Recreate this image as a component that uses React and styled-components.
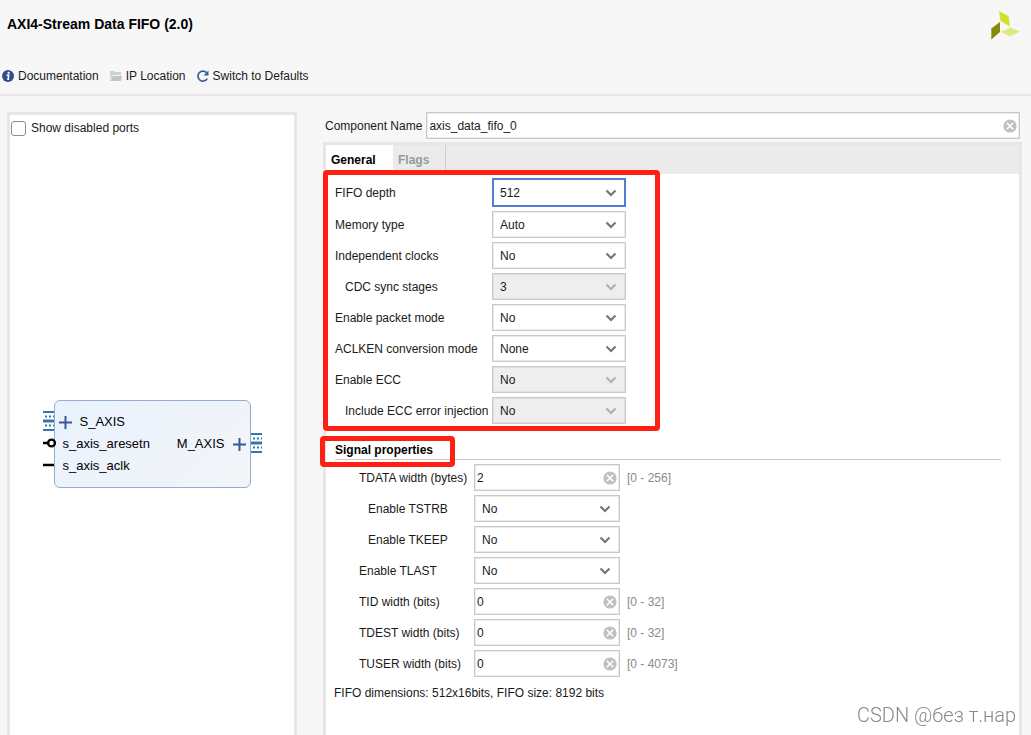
import { useState } from "react";
import styled, { createGlobalStyle } from "styled-components";

const GlobalStyle = createGlobalStyle`
  * {
    box-sizing: border-box;
  }

  body {
    margin: 0;
    background-color: #f7f7f7;
    color: #1a1a1a;
    font-family: "Liberation Sans", Arial, sans-serif;
    font-size: 12px;
    line-height: 16px;
  }

  button, input, select {
    font: inherit;
    color: inherit;
  }
`;

const Page = styled.div`
  display: flex;
  flex-direction: column;
  height: 100vh;
  overflow: hidden;
`;

const Header = styled.header`
  display: flex;
  justify-content: space-between;
  padding: 10px 11px 0 7px;
`;

const Title = styled.h1`
  margin: 5px 0 0;
  font-size: 14px;
  line-height: 18px;
  font-weight: bold;
  color: #000;
`;

const Toolbar = styled.nav`
  display: flex;
  align-items: center;
  gap: 11px;
  padding: 27px 2px 9px;
  border-bottom: 2px solid #e6e6e6;
`;

const ToolButton = styled.button`
  display: flex;
  align-items: center;
  gap: 4px;
  height: 18px;
  padding: 0;
  border: none;
  background: none;
  cursor: pointer;
`;

const Body = styled.main`
  flex: 1;
  display: flex;
  gap: 26px;
  padding: 16px 9px 0 7px;
  min-height: 0;
`;

const Preview = styled.section`
  display: flex;
  flex-direction: column;
  width: 28%;
  min-width: 290px;
  max-width: 290px;
  border: 3px solid #e6e6e6;
  border-bottom: none;
  background-color: #fff;
`;

const CheckLabel = styled.label`
  display: flex;
  align-items: center;
  gap: 5px;
  padding: 5px 1px;
`;

const Checkbox = styled.input`
  appearance: none;
  width: 15px;
  height: 15px;
  margin: 0;
  border: 1px solid #8c8c8c;
  border-radius: 3px;
  background-color: #fff;

  &:checked {
    background-color: #35599c;
  }
`;

const Canvas = styled.div`
  flex: 1;
  display: flex;
  align-items: center;
  justify-content: center;
  padding-top: 12px;
`;

const Block = styled.div`
  display: flex;
  justify-content: space-between;
  align-items: center;
  width: 197px;
  height: 88px;
  padding: 0 4px 0 4px;
  border: 1px solid #94abd6;
  border-radius: 6px;
  background: linear-gradient(135deg, #e9f2fd, #f3f5f8);
  font-size: 13px;
  line-height: 22px;
  color: #000;
`;

const PortList = styled.ul`
  margin: 0;
  padding: 0;
  list-style: none;
`;

const Port = styled.li`
  display: flex;
  align-items: center;
  gap: ${({ $bus }) => ($bus ? "8px" : "0")};
  padding-left: ${({ $bus }) => ($bus ? "0" : "4px")};
`;

const Config = styled.section`
  flex: 1;
  display: flex;
  flex-direction: column;
  min-width: 0;
`;

const NameRow = styled.div`
  display: flex;
  align-items: center;
  gap: 4px;
  padding: 0 2px;
  margin-bottom: 3px;
`;

const Panel = styled.div`
  flex: 1;
  border: 3px solid #e6e6e6;
  border-bottom: none;
  background-color: #fff;
`;

const Tabs = styled.div`
  display: flex;
  height: 29px;
  background-color: #ebebeb;
`;

const Tab = styled.button`
  width: ${({ $active }) => ($active ? "67px" : "53px")};
  padding: 0 5px;
  border: none;
  border-right: ${({ $active }) => ($active ? "none" : "1px solid #cfcfcf")};
  background-color: ${({ $active }) => ($active ? "#fff" : "transparent")};
  color: ${({ $active }) => ($active ? "#000" : "#999")};
  font-weight: bold;
  text-align: left;
  cursor: pointer;
`;

const Group = styled.div`
  position: relative;
  display: flex;
  flex-direction: column;
  gap: 4px;
  padding: 4px 9px 0;
`;

const Outline = styled.div`
  position: absolute;
  top: ${({ $top }) => $top}px;
  left: ${({ $left }) => $left}px;
  width: ${({ $width }) => $width}px;
  height: ${({ $height }) => $height}px;
  border: 5px solid #ff2015;
  border-radius: 4px;
  pointer-events: none;
`;

const Row = styled.div`
  display: flex;
  align-items: center;
`;

const Label = styled.label`
  width: ${({ $wide }) => ($wide ? "157px" : "139px")};
  padding-left: ${({ $indent }) => $indent || 0}px;
  white-space: nowrap;
`;

const Field = styled.div`
  display: grid;
  align-items: center;
  flex: ${({ $width }) => ($width ? "none" : "1")};
  width: ${({ $width }) => ($width ? `${$width}px` : "auto")};

  > * {
    grid-area: 1 / 1;
  }
`;

const SelectBox = styled.select`
  appearance: none;
  width: 100%;
  height: 27px;
  padding: 0 24px 0 7px;
  border: 1px solid #c9c9c9;
  border-radius: 0;
  background-color: #fff;
  box-shadow: inset 0 0 0 1px #ebebeb;
  outline: none;

  &:disabled {
    background-color: #eee;
    box-shadow: inset 0 0 0 1px #e0e0e0;
    color: inherit;
    opacity: 1;
  }
`;

const ActiveSelect = styled(SelectBox)`
  height: 29px;
  padding-left: 6px;
  border: 2px solid #4f7ed2;
  box-shadow: none;
`;

const TextBox = styled.input`
  width: 100%;
  height: 27px;
  padding: 0 24px 0 2px;
  border: 1px solid #c9c9c9;
  background-color: #fff;
  box-shadow: inset 0 0 0 1px #ebebeb;
  outline: none;
`;

const ChevronIcon = styled.svg`
  justify-self: end;
  margin-right: 9px;
  pointer-events: none;
`;

const ClearButton = styled.button`
  justify-self: end;
  display: flex;
  margin-right: 3px;
  padding: 0;
  border: none;
  background: none;
  cursor: pointer;
`;

const Range = styled.span`
  margin-left: 7px;
  color: #8a8a8a;
`;

const SectionTitle = styled.h2`
  position: relative;
  margin: 17px 18px 0 9px;
  border-bottom: 1px solid #c8c8c8;
  font-size: 12px;
  line-height: 18px;
  font-weight: bold;
  color: #000;
`;

const Summary = styled.p`
  margin: 8px 8px 0;
`;

const Watermark = styled.div`
  position: fixed;
  right: 15px;
  bottom: 8px;
  font-family: Roboto, sans-serif;
  font-size: 20px;
  font-weight: 300;
  line-height: 24px;
  color: #888;
  pointer-events: none;
`;

const PinColumn = styled.svg`
  position: relative;
  overflow: visible;
`;

const generalFields = [
  { id: "depth", label: "FIFO depth", value: "512", active: true },
  { id: "memory", label: "Memory type", value: "Auto" },
  { id: "clocks", label: "Independent clocks", value: "No" },
  { id: "cdc", label: "CDC sync stages", value: "3", indent: 10, disabled: true },
  { id: "packet", label: "Enable packet mode", value: "No" },
  { id: "aclken", label: "ACLKEN conversion mode", value: "None" },
  { id: "ecc", label: "Enable ECC", value: "No", disabled: true },
  { id: "eccError", label: "Include ECC error injection", value: "No", indent: 10, disabled: true },
];

const signalFields = [
  { id: "tdata", label: "TDATA width (bytes)", value: "2", range: "[0 - 256]", indent: 24 },
  { id: "tstrb", label: "Enable TSTRB", value: "No", indent: 33 },
  { id: "tkeep", label: "Enable TKEEP", value: "No", indent: 33 },
  { id: "tlast", label: "Enable TLAST", value: "No", indent: 24 },
  { id: "tid", label: "TID width (bits)", value: "0", range: "[0 - 32]", indent: 24 },
  { id: "tdest", label: "TDEST width (bits)", value: "0", range: "[0 - 32]", indent: 24 },
  { id: "tuser", label: "TUSER width (bits)", value: "0", range: "[0 - 4073]", indent: 24 },
];

const Logo = () => (
  <svg width="30" height="30" viewBox="0 0 30 30" aria-hidden="true">
    <path d="M9 1l9.500 5 1.500 10.500-9.500-5.500z" fill="#d3e02f" />
    <path d="M1.300 18.500l8.700-6.500v10l-8.700 7.500z" fill="#858a0c" />
    <path d="M10.500 21.800l10-4.300 9.500 4-10 4.700z" fill="#dfe97c" />
  </svg>
);

const InfoIcon = () => (
  <svg width="12" height="12" viewBox="0 0 12 12" aria-hidden="true">
    <circle cx="6" cy="6" r="6" fill="#2f4f8c" />
    <circle cx="6.6" cy="2.9" r="1.1" fill="#fff" />
    <path d="M4.6 5.2h2.2L6 9.2h1.2" fill="none" stroke="#fff" strokeWidth="1.5" />
  </svg>
);

const FolderIcon = () => (
  <svg width="12" height="12" viewBox="0 0 12 12" aria-hidden="true">
    <path d="M0 1h4l1 1h6v3H3L0 9z" fill="#d0d0d0" />
    <path d="M3 6h9l-1 5H0z" fill="#c4c4c4" />
  </svg>
);

const RefreshIcon = () => (
  <svg width="12" height="12" viewBox="0 0 12 12" aria-hidden="true">
    <path d="M10.2 8.8A5 5 0 1 1 9.6 2.6" fill="none" stroke="#3c5c9c" strokeWidth="1.7" />
    <path d="M11.5 0.5v5h-5z" fill="#3c5c9c" />
  </svg>
);

const ClearIcon = () => (
  <svg width="14" height="14" viewBox="0 0 14 14" aria-hidden="true">
    <circle cx="7" cy="7" r="6.6" fill="#c0c0c0" />
    <path d="M3.800 3.800l6.400 6.400M10.200 3.800l-6.400 6.400" stroke="#fff" strokeWidth="1.6" />
  </svg>
);

const PlusIcon = () => (
  <svg width="13" height="13" viewBox="0 0 13 13" aria-hidden="true">
    <path d="M0 6.5h13M6.5 0v13" stroke="#35599c" strokeWidth="2" />
  </svg>
);

const busPins = (y) => (
  <g stroke="#3a74ad">
    <path d={`M0 ${y - 9}h11M0 ${y + 9}h11`} strokeWidth="2" />
    <path d={`M0 ${y}h11`} strokeWidth="3" />
    <path d={`M2 ${y - 4.5}h9M2 ${y + 4.5}h9`} strokeWidth="2" strokeDasharray="2 2" />
  </g>
);

const LeftPins = () => (
  <PinColumn width="11" height="88" viewBox="0 0 11 88" aria-hidden="true">
    {busPins(21)}
    <path d="M0 43h5M0 65h11" stroke="#000" strokeWidth="2.6" />
    <circle cx="8.500" cy="43" r="3.4" fill="#fff" stroke="#000" strokeWidth="2.4" />
  </PinColumn>
);

const RightPins = () => (
  <PinColumn width="11" height="88" viewBox="0 0 11 88" aria-hidden="true">
    {busPins(43)}
  </PinColumn>
);

const Chevron = ({ disabled }) => (
  <ChevronIcon width="12" height="8" viewBox="0 0 12 8" aria-hidden="true">
    <path d="M1.5 1.5L6 6l4.500-4.500" fill="none" stroke={disabled ? "#b0b0b0" : "#777"} strokeWidth="2.2" />
  </ChevronIcon>
);

const SelectField = ({ field, width }) => {
  const Box = field.active ? ActiveSelect : SelectBox;
  return (
    <Field $width={width}>
      <Box id={field.id} defaultValue={field.value} disabled={field.disabled}>
        <option>{field.value}</option>
      </Box>
      <Chevron disabled={field.disabled} />
    </Field>
  );
};

const TextField = ({ id, initial, width }) => {
  const [value, setValue] = useState(initial);
  return (
    <Field $width={width}>
      <TextBox id={id} value={value} onChange={(e) => setValue(e.target.value)} />
      <ClearButton type="button" aria-label="Clear" onClick={() => setValue("")}>
        <ClearIcon />
      </ClearButton>
    </Field>
  );
};

const App = () => {
  const [showDisabled, setShowDisabled] = useState(false);

  return (
    <Page>
      <GlobalStyle />
      <Header>
        <Title>AXI4-Stream Data FIFO (2.0)</Title>
        <Logo />
      </Header>
      <Toolbar>
        <ToolButton><InfoIcon />Documentation</ToolButton>
        <ToolButton><FolderIcon />IP Location</ToolButton>
        <ToolButton><RefreshIcon />Switch to Defaults</ToolButton>
      </Toolbar>

      <Body>
        <Preview>
          <CheckLabel>
            <Checkbox
              type="checkbox"
              checked={showDisabled}
              onChange={(e) => setShowDisabled(e.target.checked)}
            />
            Show disabled ports
          </CheckLabel>
          <Canvas>
            <LeftPins />
            <Block>
              <PortList>
                <Port $bus><PlusIcon />S_AXIS</Port>
                <Port>s_axis_aresetn</Port>
                <Port>s_axis_aclk</Port>
              </PortList>
              <PortList>
                <Port $bus>M_AXIS<PlusIcon /></Port>
              </PortList>
            </Block>
            <RightPins />
          </Canvas>
        </Preview>

        <Config>
          <NameRow>
            <label htmlFor="componentName">Component Name</label>
            <TextField id="componentName" initial="axis_data_fifo_0" />
          </NameRow>

          <Panel>
            <Tabs>
              <Tab $active>General</Tab>
              <Tab>Flags</Tab>
            </Tabs>

            <Group>
              {generalFields.map((field) => (
                <Row key={field.id}>
                  <Label htmlFor={field.id} $wide $indent={field.indent}>{field.label}</Label>
                  <SelectField field={field} width={134} />
                </Row>
              ))}
              <Outline $top={-4} $left={-3} $width={337} $height={261} />
            </Group>

            <SectionTitle>
              Signal properties
              <Outline $top={-5} $left={-15} $width={135} $height={31} />
            </SectionTitle>

            <Group>
              {signalFields.map((field) => (
                <Row key={field.id}>
                  <Label htmlFor={field.id} $indent={field.indent}>{field.label}</Label>
                  {field.range ? (
                    <TextField id={field.id} initial={field.value} width={146} />
                  ) : (
                    <SelectField field={field} width={146} />
                  )}
                  {field.range && <Range>{field.range}</Range>}
                </Row>
              ))}
            </Group>
            <Summary>FIFO dimensions: 512x16bits, FIFO size: 8192 bits</Summary>
          </Panel>
        </Config>
      </Body>
      <Watermark>CSDN @без т.нар</Watermark>
    </Page>
  );
};

export default App;
